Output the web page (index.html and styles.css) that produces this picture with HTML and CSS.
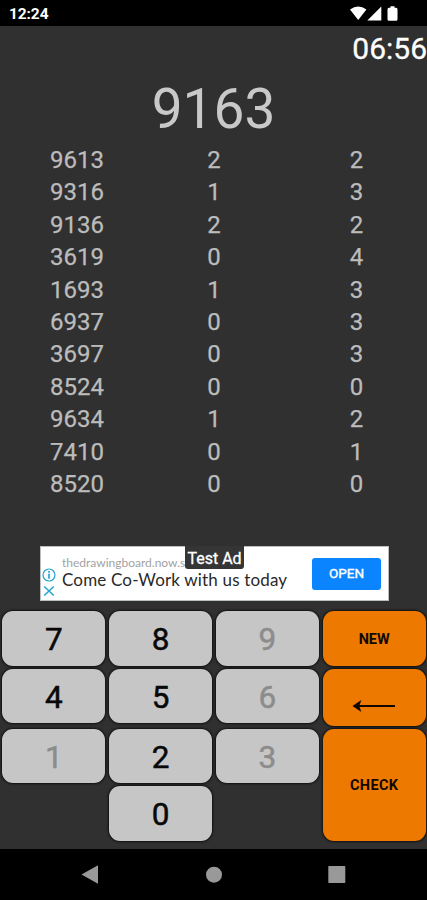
FILE: index.html
```html
<!DOCTYPE html>
<html lang="en">
<head>
<meta charset="utf-8">
<title>Number Game</title>
<link rel="stylesheet" href="styles.css">
</head>
<body>
<div class="screen">
  <header class="status">
    <span class="clock">12:24</span>
    <svg class="status-icons" width="50" height="16" viewBox="0 0 50 16" fill="#fff">
      <path d="M0 3.6Q8.2-2.6 16.4 3.6L8.2 14.1Z"/>
      <path d="M31.3.5V14.4H17.3Z"/>
      <path d="M40.5 .2h4v1.5h1.5q1.5 0 1.5 1.5v10q0 1.6-1.5 1.6h-7q-1.5 0-1.5-1.6v-10q0-1.5 1.5-1.5h1.5z"/>
    </svg>
  </header>
  <main class="game">
    <div class="timer">06:56</div>
    <div class="guess">9163</div>
    <div class="history">
      <span>9613</span><span>2</span><span>2</span>
      <span>9316</span><span>1</span><span>3</span>
      <span>9136</span><span>2</span><span>2</span>
      <span>3619</span><span>0</span><span>4</span>
      <span>1693</span><span>1</span><span>3</span>
      <span>6937</span><span>0</span><span>3</span>
      <span>3697</span><span>0</span><span>3</span>
      <span>8524</span><span>0</span><span>0</span>
      <span>9634</span><span>1</span><span>2</span>
      <span>7410</span><span>0</span><span>1</span>
      <span>8520</span><span>0</span><span>0</span>
    </div>
    <aside class="ad">
      <svg class="ad-marks" width="14" height="30" viewBox="0 0 14 30" fill="none" stroke="#21a5cf" stroke-width="1.2">
        <circle cx="7" cy="7" r="6"/>
        <path d="M7 5.8V10.8M7 3v1.7" stroke-width="1.7"/>
        <path d="M2.2 18.5l9.6 9M11.8 18.5l-9.6 9" stroke-width="1.5"/>
      </svg>
      <div class="ad-text">
        <span class="ad-site">thedrawingboard.now.s</span>
        <span class="ad-title">Come Co-Work with us today</span>
      </div>
      <span class="ad-open">OPEN</span>
      <span class="ad-label">Test Ad</span>
    </aside>
    <div class="keypad">
      <div class="column">
        <button class="key">7</button>
        <button class="key">4</button>
        <button class="key third used">1</button>
      </div>
      <div class="column">
        <button class="key">8</button>
        <button class="key">5</button>
        <button class="key third">2</button>
        <button class="key">0</button>
      </div>
      <div class="column">
        <button class="key used">9</button>
        <button class="key used">6</button>
        <button class="key third used">3</button>
      </div>
      <div class="column">
        <button class="key action">NEW</button>
        <button class="key action back">
          <svg width="44" height="14" viewBox="0 0 44 14"><path d="M4 7H43" stroke="#120800" stroke-width="2"/><path d="M.5 7L9.3 1 7.3 7l2 6Z" fill="#120800"/></svg>
        </button>
        <button class="key action check">CHECK</button>
      </div>
    </div>
  </main>
  <nav class="nav">
    <svg width="427" height="51" viewBox="0 0 427 51" fill="#999">
      <path d="M81.5 25.5L98 16.3V34.7Z"/>
      <circle cx="214" cy="25.7" r="8"/>
      <rect x="328.3" y="17" width="17" height="17" rx=".8"/>
    </svg>
  </nav>
</div>
</body>
</html>
```

FILE: styles.css
```css
* { box-sizing: border-box; }
body { margin: 0; background: #303030; font-family: Roboto, sans-serif; }
.screen { width: 427px; height: 900px; display: flex; flex-direction: column; overflow: hidden; }
.status {
  height: 26px; flex: none; background: #000; color: #fff;
  display: flex; justify-content: space-between; padding: 6px 27px 0 9px;
}
.clock { font-size: 15.5px; font-weight: 700; line-height: 17px; letter-spacing: -.1px; }
.game { flex: 1; display: flex; flex-direction: column; background: #303030; }
.timer { height: 46px; line-height: 45px; font-size: 30px; color: #fff; text-align: right; -webkit-text-stroke: .3px #fff; }
.guess { height: 72px; line-height: 75px; font-size: 55px; color: #c9c9c9; text-align: center; }
.history {
  display: grid; grid-template-columns: 154px 120px 165px; grid-auto-rows: 32.4px;
  width: 439px; height: 402px; font-size: 24px; line-height: 32.4px;
  color: #bcbcbc; text-align: center; -webkit-text-stroke: .25px #bcbcbc;
}
.ad {
  position: relative; width: 349px; height: 55px; flex: none; margin-left: 40px;
  background: #fff; border: 1px solid #b9bebe; display: flex;
}
.ad-marks { margin: 21px 0 0 1px; }
.ad-text { display: flex; flex-direction: column; width: 256px; padding: 9px 0 0 6px; white-space: nowrap; font-family: Lato, sans-serif; }
.ad-site { font-size: 12px; line-height: 14px; color: #a2a2a2; }
.ad-title { font-size: 17px; line-height: 20px; color: #292929; letter-spacing: .17px; }
.ad-open {
  width: 69px; height: 32px; margin-top: 11px; border-radius: 3px; background: #0b84ff;
  color: #fff; font-size: 13.5px; line-height: 31px; text-align: center; -webkit-text-stroke: .4px #fff;
}
.ad-label {
  position: absolute; left: 144px; top: -1px; width: 59px; height: 23px;
  border-radius: 0 0 3px 3px; background: #353535; color: #fff;
  font-size: 16px; line-height: 25px; text-align: center; white-space: nowrap; -webkit-text-stroke: .3px #fff;
}
.keypad { display: grid; grid-template-columns: repeat(4, 103px); column-gap: 3.8px; padding: 10px 0 0 2.3px; }
.column { display: flex; flex-direction: column; gap: 3px; }
.key {
  width: 103px; height: 54.5px; border: 0; border-radius: 11px; padding: 0;
  background: #c6c6c6; color: #080808; box-shadow: 0 0 2px 1px #111;
  font-family: Roboto, sans-serif; font-size: 31.5px; font-weight: 400; line-height: 57px; text-align: center;
  -webkit-text-stroke: .5px currentColor;
}
.third { margin-top: 2.5px; }
.used { color: #8c8c8c; }
.action { background: #ee7900; color: #120800; font-size: 14.5px; font-weight: 700; -webkit-text-stroke: 0; }
.back { height: 57.5px; display: flex; justify-content: center; padding-top: 30px; }
.check { height: 111.5px; line-height: 113px; letter-spacing: .4px; }
.nav { height: 51px; flex: none; background: #000; }
.nav svg { display: block; }
```
